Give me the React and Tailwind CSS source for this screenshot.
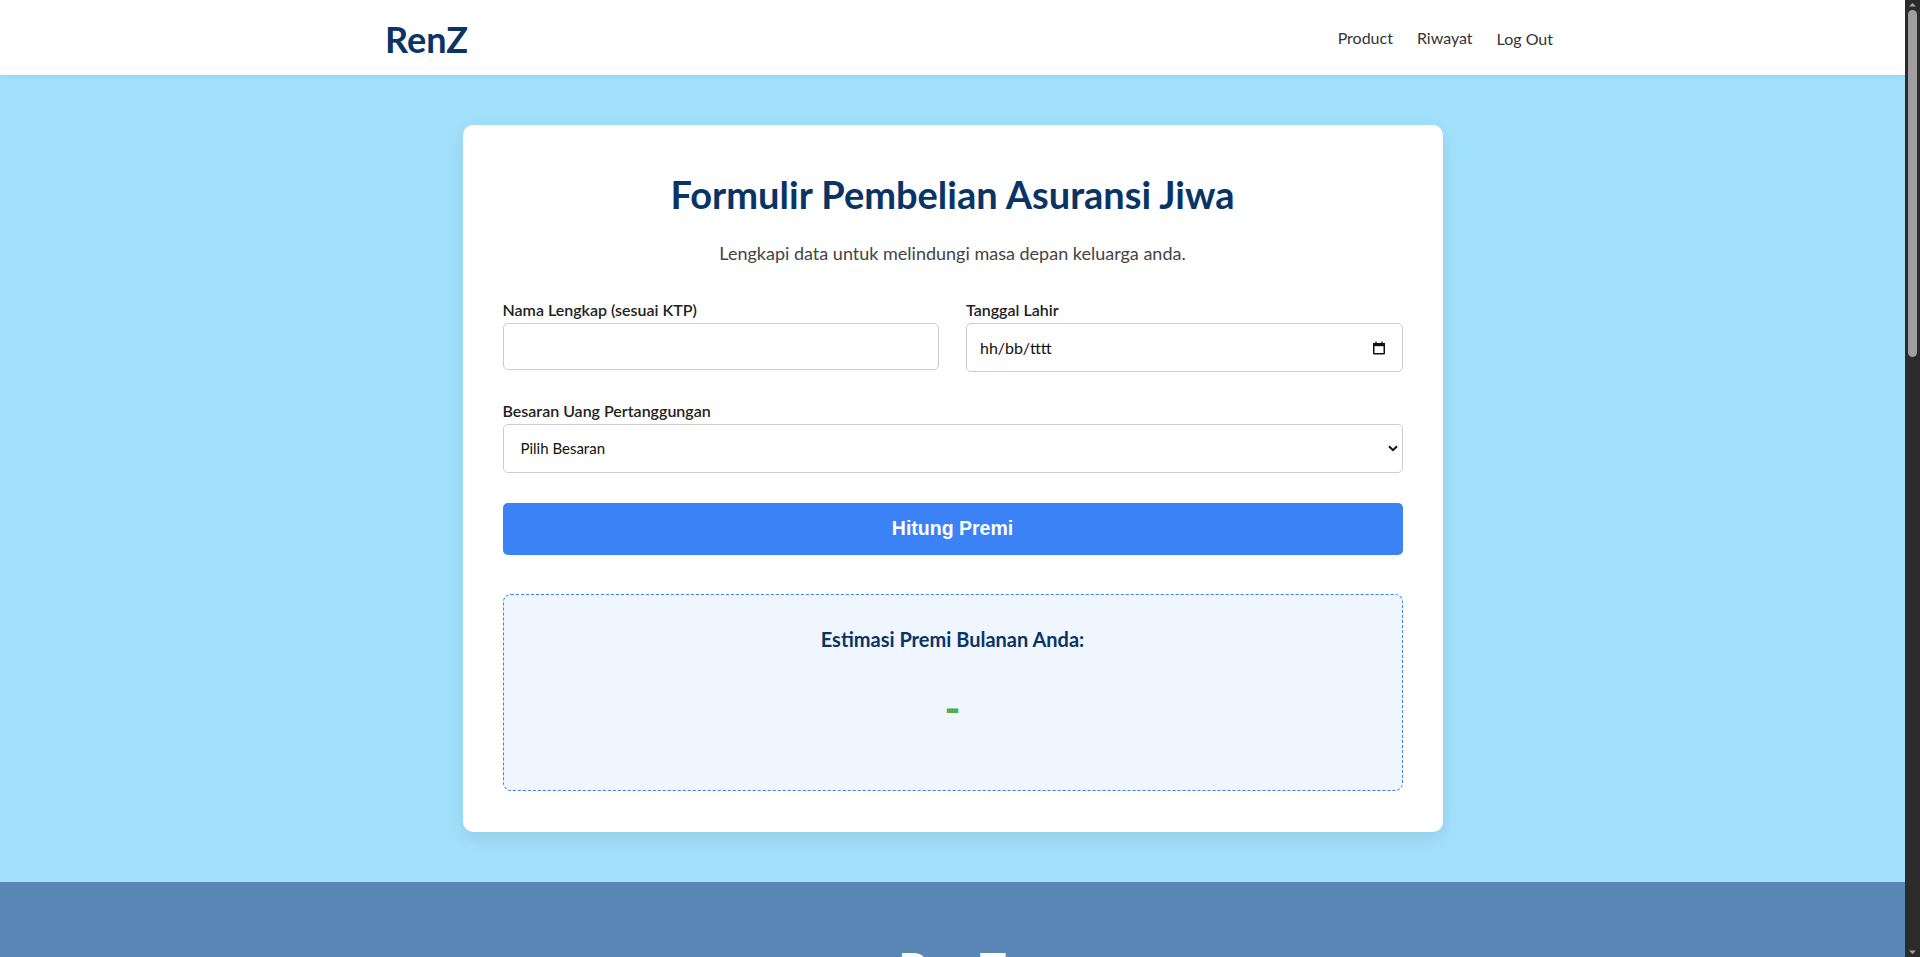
import React from "react";

const CalendarIcon = () => (
  <svg width="14" height="14" viewBox="0 0 14 14" fill="none">
    <rect x="1.75" y="2.75" width="10.5" height="10" rx="0.5" stroke="#111" strokeWidth="1.5" />
    <rect x="1" y="2" width="12" height="3.2" fill="#111" />
    <rect x="3.3" y="0.6" width="1.4" height="2.4" fill="#111" />
    <rect x="9.3" y="0.6" width="1.4" height="2.4" fill="#111" />
  </svg>
);

const Chevron = () => (
  <svg width="10" height="7" viewBox="0 0 10 7" fill="none">
    <path d="M1 1.2 L5 5.2 L9 1.2" stroke="#111" strokeWidth="2" />
  </svg>
);

const Field = ({ label, children }) => (
  <div className="flex flex-col">
    <label className="mb-[3px] text-[16px] leading-[20px] font-semibold text-[#222]">{label}</label>
    {children}
  </div>
);

// dark window scrollbar, as in the screenshot
const Scrollbar = () => (
  <div className="w-[15px] shrink-0 bg-[#2b2b2b] flex flex-col items-center">
    <svg width="15" height="10" viewBox="0 0 15 10" className="shrink-0">
      <path d="M4 6.5 L7.5 3 L11 6.5 Z" fill="#a3a3a3" />
    </svg>
    <div className="w-[9px] h-[347px] rounded-full bg-[#9f9f9f]" />
    <div className="flex-1" />
    <svg width="15" height="10" viewBox="0 0 15 10" className="shrink-0">
      <path d="M4 3.5 L7.5 7 L11 3.5 Z" fill="#a3a3a3" />
    </svg>
  </div>
);

export default function App() {
  return (
    <div className="h-screen flex font-[Lato,sans-serif]">
      <div className="flex-1 overflow-y-auto [scrollbar-width:none] bg-[#a2e1fc]">
        <nav className="h-[75px] bg-white flex items-center justify-between pl-[385px] pr-[352px] shadow-[0_1px_4px_rgba(0,0,0,0.08)]">
          <div className="text-[36px] font-bold text-[#0a3466] leading-none mt-[3px]">RenZ</div>
          <ul className="flex items-center gap-[24px] text-[16px] text-[#333]">
            <li>Product</li>
            <li>Riwayat</li>
            <li className="mt-[2px]">Log Out</li>
          </ul>
        </nav>

        <main className="py-[50px]">
          <div className="mx-auto w-[980px] bg-white rounded-[10px] shadow-[0_6px_20px_rgba(0,0,0,0.1)] px-10 pt-[47px] pb-[41px]">
            <h1 className="text-center text-[38px] leading-[45px] font-bold text-[#0a3466]">
              Formulir Pembelian Asuransi Jiwa
            </h1>
            <p className="mt-[24px] text-center text-[18px] leading-[24px] text-[#444]">
              Lengkapi data untuk melindungi masa depan keluarga anda.
            </p>

            <div className="mt-[35px] grid grid-cols-2 gap-[27px]">
              <Field label="Nama Lengkap (sesuai KTP)">
                <input
                  type="text"
                  className="h-[47px] rounded-[5px] border border-[#ccc] px-3 text-[15px] outline-none"
                />
              </Field>
              <Field label="Tanggal Lahir">
                <div className="h-[49px] rounded-[5px] border border-[#ccc] flex items-center pl-[13px] pr-[16px]">
                  <input
                    type="text"
                    placeholder="hh/bb/tttt"
                    className="flex-1 text-[16px] outline-none placeholder:text-[#111]"
                  />
                  <CalendarIcon />
                </div>
              </Field>
            </div>

            <div className="mt-[29px]">
              <Field label="Besaran Uang Pertanggungan">
                <div className="h-[49px] rounded-[5px] border border-[#ccc] flex items-center justify-between pl-[17px] pr-[4px] text-[15px] text-[#111]">
                  <span>Pilih Besaran</span>
                  <Chevron />
                </div>
              </Field>
            </div>

            <button className="mt-[30px] w-full h-[52px] rounded-[5px] bg-[#3b82f6] text-white text-[19.5px] font-bold font-[Liberation_Sans,Arial,sans-serif]">
              Hitung Premi
            </button>

            <div className="mt-[39px] h-[197px] rounded-[8px] border border-dashed border-[#3b82f6] bg-[#eff6ff] flex flex-col items-center pt-[31px]">
              <h3 className="text-[20px] leading-[26px] font-bold text-[#0a3466]">Estimasi Premi Bulanan Anda:</h3>
              <p className="mt-[30px] text-[44px] leading-[50px] font-bold text-[#4caf50]">-</p>
            </div>
          </div>
        </main>

        <footer className="bg-[#5a87b6] pt-[60px] min-h-[1700px] text-center text-white">
          <div className="text-[47px] leading-[56px] font-bold">RenZ</div>
          <p className="mt-4 text-[16px] text-white/90">
            Melindungi masa depan keluarga anda dengan asuransi terpercaya.
          </p>
          <ul className="mt-8 flex justify-center gap-8 text-[15px]">
            <li>Product</li>
            <li>Riwayat</li>
            <li>Kontak</li>
          </ul>
          <p className="mt-10 text-[14px] text-white/80">© 2024 RenZ. All rights reserved.</p>
        </footer>
      </div>
      <Scrollbar />
    </div>
  );
}
